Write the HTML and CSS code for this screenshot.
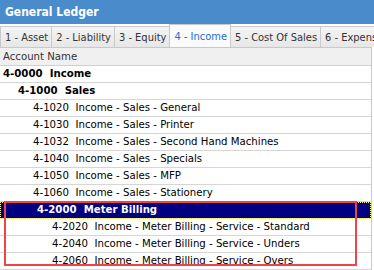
FILE: index.html
```html
<!DOCTYPE html>
<html>
<head>
<meta charset="utf-8">
<link rel="stylesheet" href="styles.css">
</head>
<body>
<div class="win">
  <div class="title">General Ledger</div>
  <div class="tabs">
    <div class="tab">1 - Asset</div>
    <div class="tab">2 - Liability</div>
    <div class="tab">3 - Equity</div>
    <div class="tab sel">4 - Income</div>
    <div class="tab">5 - Cost Of Sales</div>
    <div class="tab">6 - Expenses</div>
  </div>
  <div class="grid">
    <div class="head">Account Name</div>
    <div class="row b l0">4-0000&nbsp; Income</div>
    <div class="row b l1">4-1000&nbsp; Sales</div>
    <div class="row l2">4-1020&nbsp; Income - Sales - General</div>
    <div class="row l2">4-1030&nbsp; Income - Sales - Printer</div>
    <div class="row l2">4-1032&nbsp; Income - Sales - Second Hand Machines</div>
    <div class="row l2">4-1040&nbsp; Income - Sales - Specials</div>
    <div class="row l2">4-1050&nbsp; Income - Sales - MFP</div>
    <div class="row l2">4-1060&nbsp; Income - Sales - Stationery</div>
    <div class="row b l1b current">4-2000&nbsp; Meter Billing</div>
    <div class="row l2b">4-2020&nbsp; Income - Meter Billing - Service - Standard</div>
    <div class="row l2b">4-2040&nbsp; Income - Meter Billing - Service - Unders</div>
    <div class="row l2b">4-2060&nbsp; Income - Meter Billing - Service - Overs</div>
    <div class="mark"></div>
  </div>
</div>
</body>
</html>
```
FILE: styles.css
```css
html, body { margin: 0; padding: 0; background: #fff; }
body { width: 374px; height: 270px; overflow: hidden; font-family: "DejaVu Sans Condensed", "Liberation Sans", sans-serif; }
.win { width: 374px; }
.title {
  height: 24px; line-height: 24px; background: #4a8ccb; color: #fff;
  font-weight: bold; font-size: 12px; padding-left: 5px;
}
.tabs { display: flex; height: 23px; background: #fff; white-space: nowrap; overflow: hidden; }
.tab {
  flex: none; margin-top: 2px; height: 21px; line-height: 21px; padding: 0 3px 0 4px;
  border: 1px solid #c9c9c9; border-bottom: none; border-right: none;
  background: linear-gradient(#f4f4f4, #e6e6e6); color: #333; font-size: 11px;
}
.tab.sel { margin-top: 0; height: 23px; line-height: 24px; background: #fafafa; color: #1e6fcf; border-right: 1px solid #c9c9c9; }
.tab.sel + .tab { border-left: none; }
.grid { position: relative; width: 371px; border-right: 1px solid #c9c9c9; }
.head {
  height: 17px; line-height: 17px; background: #f0f0f0; color: #333; font-size: 11.3px;
  padding-left: 3px; border-top: 1px solid #c9c9c9; border-bottom: 1px solid #d0d0d0;
}
.row {
  height: 16px; line-height: 16px; border-bottom: 1px solid #d6d6d6; font-size: 11.3px; color: #000; white-space: nowrap;
}
.b { font-weight: bold; }
.l0 { padding-left: 3px; }
.l1 { padding-left: 18px; }
.l2 { padding-left: 33px; }
.l1b { padding-left: 37px; }
.l2b { padding-left: 52px; }
.current {
  background: #000080; color: #fff; outline: 1px dotted #ffff80; outline-offset: -1px;
}
.mark {
  position: absolute; left: 4px; top: 154px; width: 349px; height: 61px;
  border: 2px solid #ef4548;
}
```
